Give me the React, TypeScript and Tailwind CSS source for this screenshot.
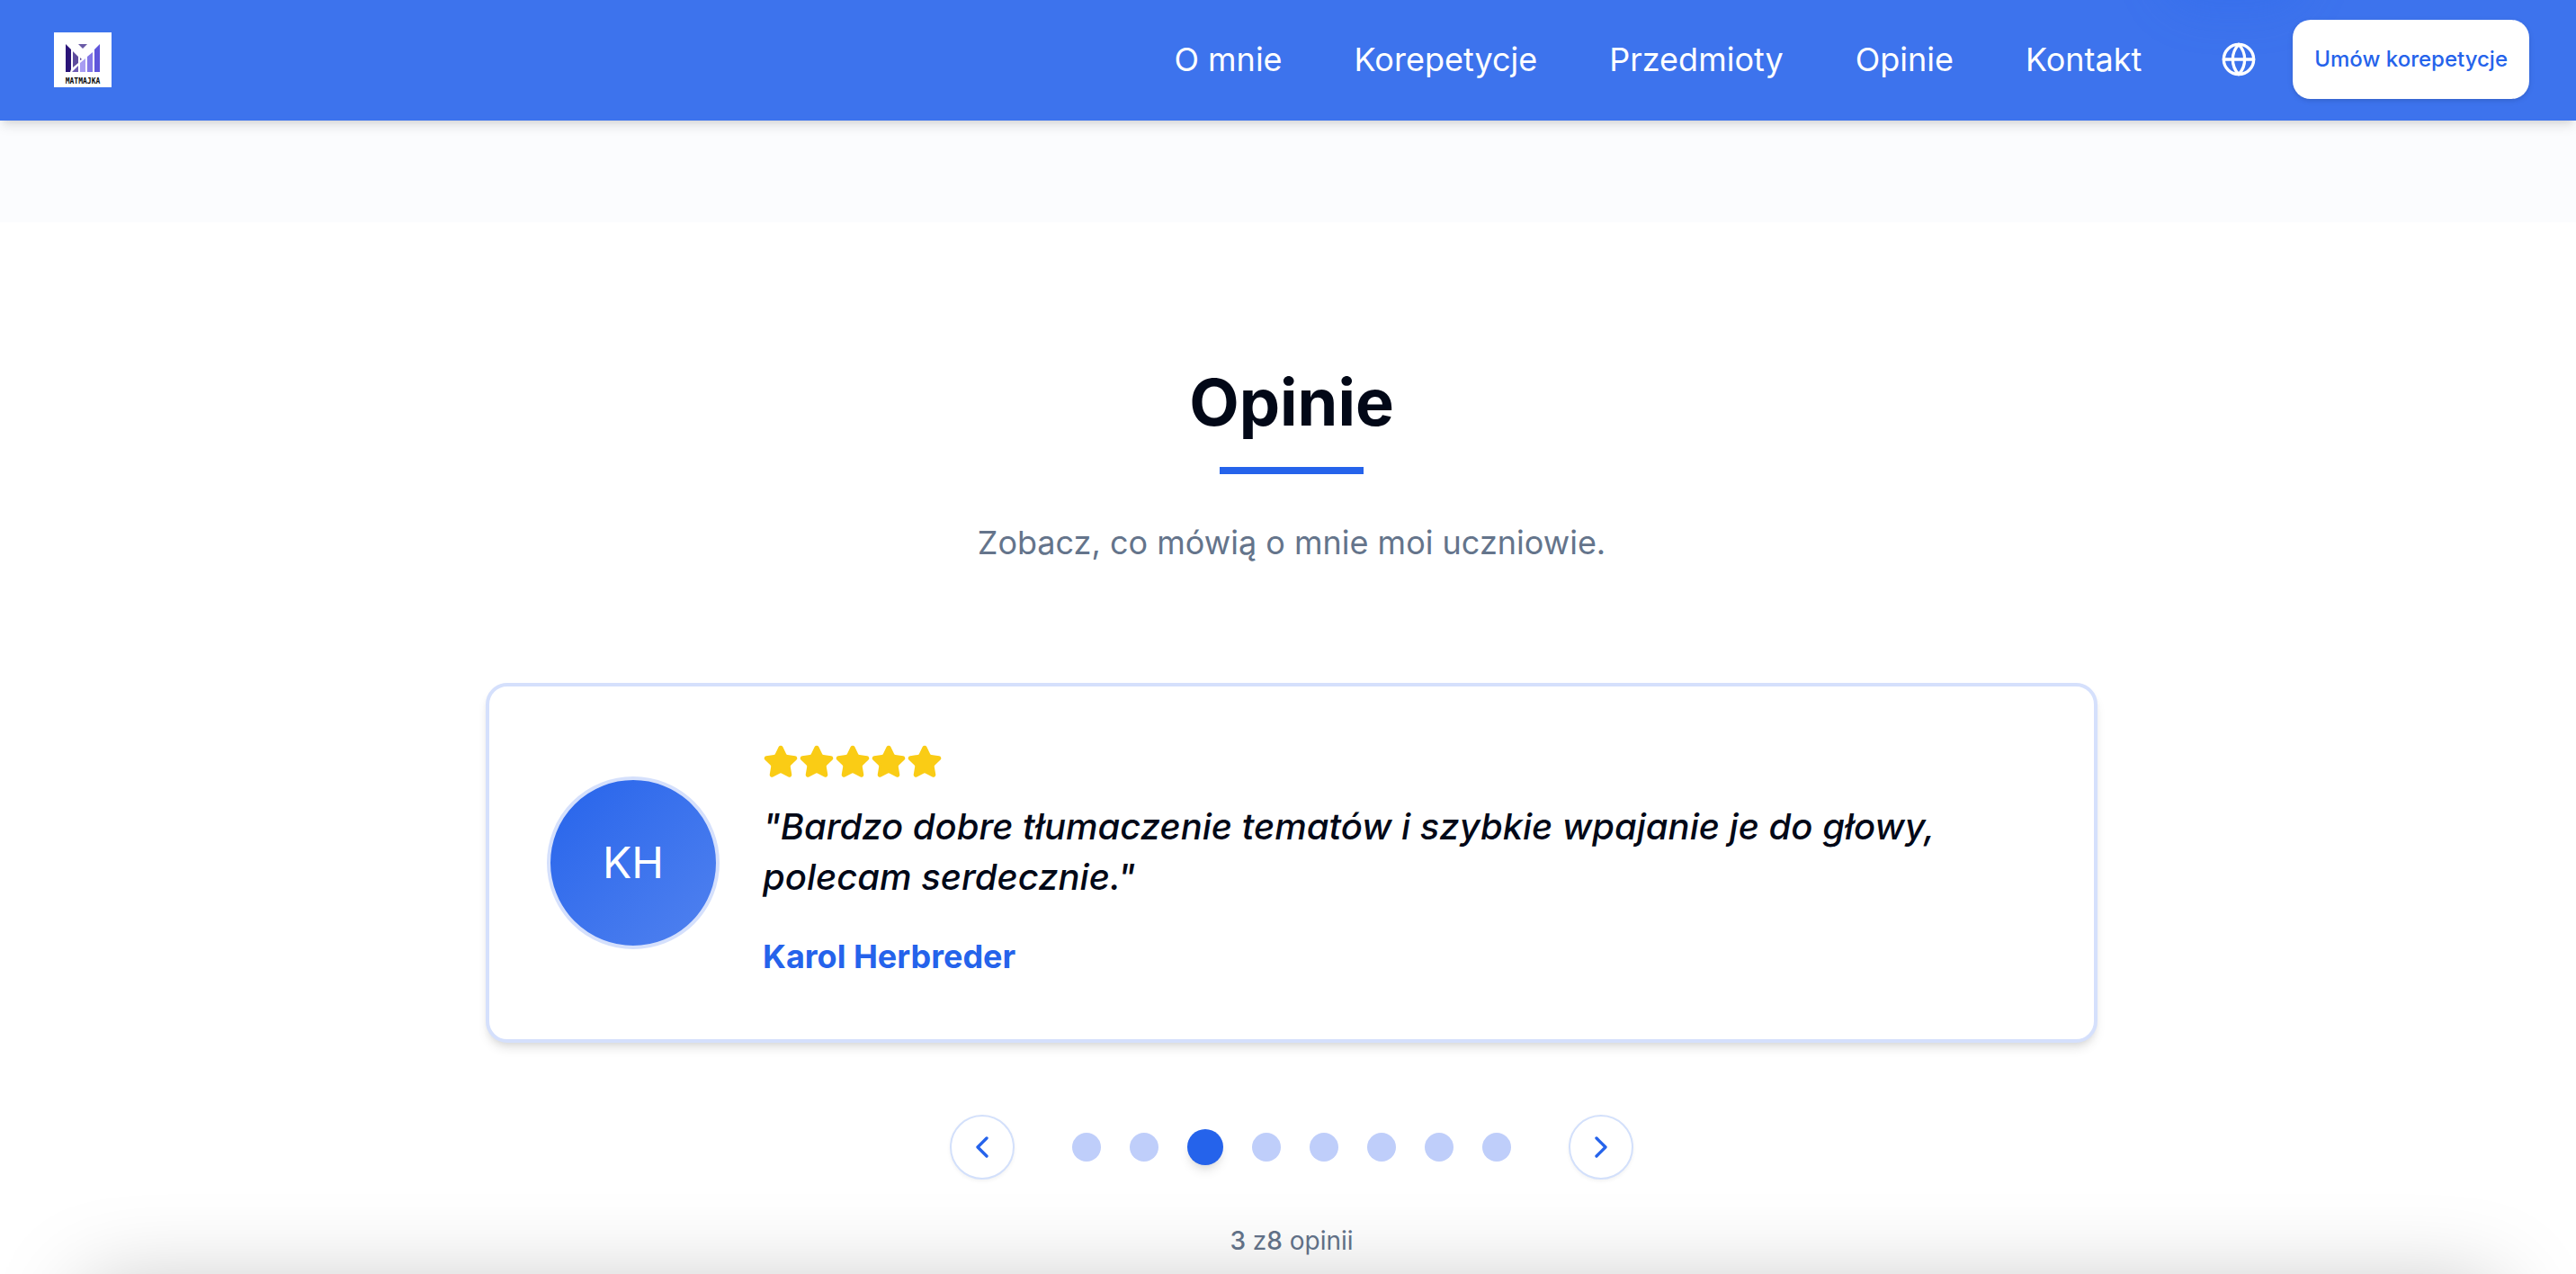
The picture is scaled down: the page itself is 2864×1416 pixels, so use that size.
import { ChevronLeft, ChevronRight, Globe, Star } from "lucide-react";

const navItems = ["O mnie", "Korepetycje", "Przedmioty", "Opinie", "Kontakt"];
const stars = [1, 2, 3, 4, 5];
const reviews = [1, 2, 3, 4, 5, 6, 7, 8];
const activeReview = 3;

function Logo() {
  return (
    <svg viewBox="0 0 64 61" className="h-[61px] w-16" role="img" aria-label="Matmajka">
      <rect width="64" height="61" fill="#ffffff" />
      <path d="M13 13l6 6v22l-1 3h-5z" fill="#2a1478" />
      <path d="M21 21l6 6v7l-6 5z" fill="#5d4b9c" />
      <path d="M27 37v7h-7z" fill="#6d5bb4" />
      <path d="M27 13h10l-5 5z" fill="#6a5aa6" />
      <path d="M29 28l2 2-2 1z" fill="#5d4b9c" />
      <path d="M29 34l6-5v15h-6z" fill="#a79cf2" />
      <path d="M37 27l6-5v22h-6z" fill="#8377e6" />
      <path d="M45 19l6-6v31h-6z" fill="#5f55db" />
      <text x="32" y="57" textAnchor="middle" fontSize="8" fontWeight="700" fontFamily="'DejaVu Sans Mono', monospace" fill="#0a0a0a">
        MATMAJKA
      </text>
    </svg>
  );
}

function Header() {
  return (
    <header className="relative z-10 flex h-[134px] shrink-0 items-center justify-between bg-[#3d73ed] pr-[52px] pb-0.5 pl-[60px] shadow-[0_8px_12px_-2px_rgba(0,0,0,0.1),0_4px_8px_-4px_rgba(0,0,0,0.1)]">
      <div className="pointer-events-none absolute inset-0 overflow-hidden">
        <div className="absolute -top-20 right-[300px] h-[90px] w-40 rounded-full bg-[#2563eb]/25 blur-xl" />
      </div>
      <a href="#start">
        <Logo />
      </a>
      <div className="relative flex items-center">
        <nav className="flex gap-20 text-4xl leading-[56px] text-white">
          {navItems.map((item) => (
            <a key={item} href="#sekcja">
              {item}
            </a>
          ))}
        </nav>
        <button type="button" aria-label="Zmień język" className="mr-10 ml-[88px] text-white">
          <Globe size={40} />
        </button>
        <button
          type="button"
          className="h-[88px] rounded-[20px] bg-white px-6 text-2xl font-medium text-[#2563eb] shadow-[0_2px_6px_rgba(0,0,0,0.1),0_2px_4px_-2px_rgba(0,0,0,0.1)]"
        >
          Umów korepetycje
        </button>
      </div>
    </header>
  );
}

function ReviewCard() {
  return (
    <article className="mt-32 flex w-full max-w-[1792px] items-center gap-12 rounded-3xl border-4 border-[#d5e0fc] bg-white p-16 shadow-[0_8px_12px_-2px_rgba(0,0,0,0.1),0_4px_8px_-4px_rgba(0,0,0,0.1)]">
      <div className="flex size-48 shrink-0 items-center justify-center rounded-full border-4 border-[#d5e0fc] bg-linear-to-br from-[#2563eb] to-[#5182ef] bg-origin-border text-5xl text-white">
        KH
      </div>
      <div>
        <div className="flex text-[#facc15]" role="img" aria-label="5 na 5 gwiazdek">
          {stars.map((star) => (
            <Star key={star} size={40} fill="currentColor" />
          ))}
        </div>
        <blockquote className="mt-6 text-[40px] leading-[56px] font-medium text-[#020817] italic">
          "Bardzo dobre tłumaczenie tematów i szybkie wpajanie je do głowy, polecam serdecznie."
        </blockquote>
        <p className="mt-8 text-4xl leading-[56px] font-bold text-[#2563eb]">Karol Herbreder</p>
      </div>
    </article>
  );
}

function Pagination() {
  const arrow =
    "flex size-[72px] items-center justify-center rounded-full border-2 border-[#d3e0fb] bg-white text-[#2563eb] shadow-[0_2px_4px_rgba(0,0,0,0.05)]";
  return (
    <div className="mt-20 flex items-center gap-16">
      <button type="button" aria-label="Poprzednia opinia" className={arrow}>
        <ChevronLeft size={40} />
      </button>
      <div className="flex items-center gap-8">
        {reviews.map((n) => (
          <button
            key={n}
            type="button"
            aria-label={`Opinia ${n}`}
            className={
              n === activeReview
                ? "size-10 rounded-full bg-[#2563eb] shadow-[0_8px_12px_-2px_rgba(0,0,0,0.1),0_4px_8px_-4px_rgba(0,0,0,0.1)]"
                : "size-8 rounded-full bg-[#bfcefa]"
            }
          />
        ))}
      </div>
      <button type="button" aria-label="Następna opinia" className={arrow}>
        <ChevronRight size={40} />
      </button>
    </div>
  );
}

export default function App() {
  return (
    <div className="relative flex h-screen flex-col overflow-hidden bg-white font-['Inter',sans-serif]">
      <Header />
      <div className="h-[113px] shrink-0 bg-[#fbfcfe]" />
      <section className="flex flex-col items-center pt-40 pl-2">
        <h2 className="text-7xl leading-[80px] font-bold text-[#020817]">Opinie</h2>
        <div className="mt-8 h-2 w-40 bg-[#2563eb]" />
        <p className="mt-12 text-4xl leading-[56px] text-[#64748b]">Zobacz, co mówią o mnie moi uczniowie.</p>
        <ReviewCard />
        <Pagination />
        <p className="mt-12 text-[28px] leading-10 text-[#64748b]">
          <span className="font-medium">3</span> z<span className="font-medium">8</span> opinii
        </p>
      </section>
      <div className="pointer-events-none absolute inset-x-0 top-full pr-16 pl-[72px]">
        <div className="h-80 shadow-[0_-8px_100px_-24px_rgba(0,0,0,0.25)]" />
      </div>
    </div>
  );
}
